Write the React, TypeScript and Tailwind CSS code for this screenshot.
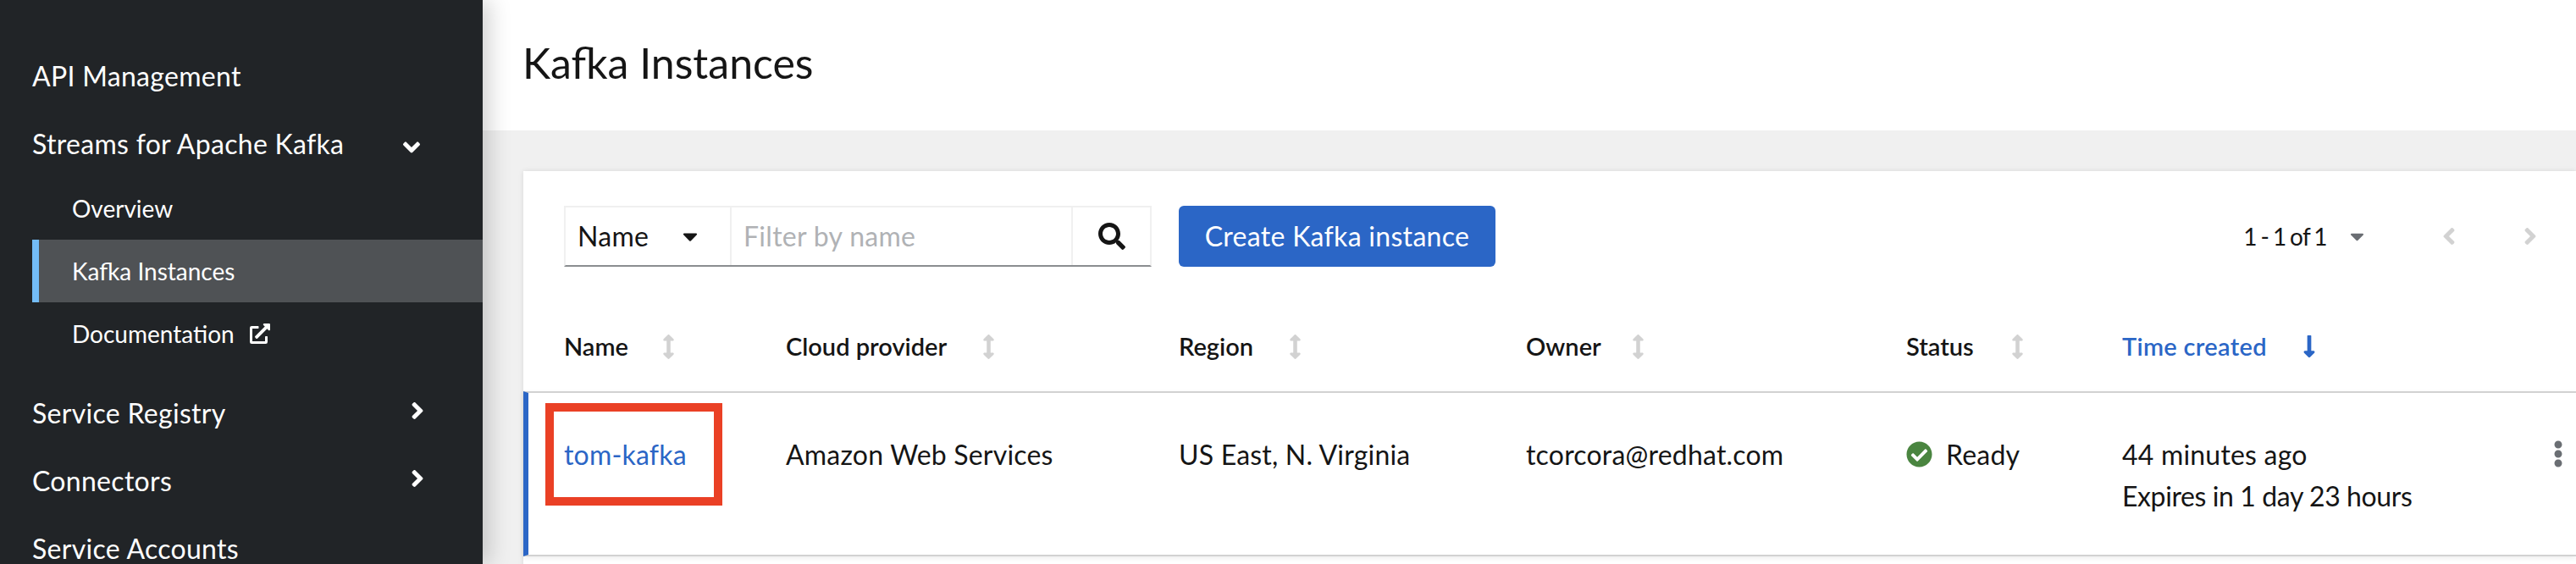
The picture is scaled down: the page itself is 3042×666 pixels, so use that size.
import React from 'react';
import {
  FaAngleDown,
  FaAngleLeft,
  FaAngleRight,
  FaArrowsAltV,
  FaCaretDown,
  FaCheckCircle,
  FaEllipsisV,
  FaExternalLinkAlt,
  FaLongArrowAltDown,
  FaSearch,
} from 'react-icons/fa';

const SortIcon = () => <FaArrowsAltV className="w-[15px] h-[29px] text-[#d2d2d2]" />;

const Sidebar = () => (
  <aside className="w-[570px] shrink-0 bg-[#212427] text-white pt-[50px] z-10 shadow-[8px_0_24px_rgba(0,0,0,0.18)]">
    <div className="h-[80px] pl-[38px] flex items-center text-[32px] tracking-[0.3px]">API Management</div>
    <div className="h-[80px] pl-[38px] pr-[72px] flex items-center justify-between text-[32px] tracking-[0.3px]">
      Streams for Apache Kafka
      <FaAngleDown className="w-[24px] h-[32px] mt-[8px]" />
    </div>
    <div className="h-[73px] pb-[2px] pl-[85px] flex items-center text-[28px]">Overview</div>
    <div className="h-[74px] ml-[38px] pl-[39px] flex items-center text-[28px] bg-[#4f5255] border-l-[8px] border-[#73bcf7]">
      Kafka Instances
    </div>
    <div className="h-[74px] pl-[85px] flex items-center gap-[18px] text-[28px]">
      Documentation
      <FaExternalLinkAlt className="w-[24px] h-[24px]" />
    </div>
    <div className="h-[80px] mt-[17px] pl-[38px] pr-[68px] flex items-center justify-between text-[32px] tracking-[0.3px]">
      Service Registry
      <FaAngleRight className="w-[18px] h-[32px] -mt-[6px]" />
    </div>
    <div className="h-[80px] pl-[38px] pr-[68px] flex items-center justify-between text-[32px] tracking-[0.3px]">
      Connectors
      <FaAngleRight className="w-[18px] h-[32px] -mt-[6px]" />
    </div>
    <div className="h-[80px] pl-[38px] flex items-center text-[32px] tracking-[0.3px]">Service Accounts</div>
  </aside>
);

const Toolbar = () => (
  <div className="flex items-stretch h-[72px] pr-[46px] tracking-[0.3px]">
    <div className="flex border-2 border-[#f0f0f0] border-b-[#8a8d90]">
      <div className="w-[194px] pl-[14px] pr-[37px] flex items-center justify-between text-[32px] text-[#151515]">
        Name
        <FaCaretDown className="w-[20px] h-[28px]" />
      </div>
      <div className="w-[403px] pl-[14px] flex items-center border-l-2 border-[#f0f0f0] text-[32px] text-[#b0b2b5]">
        Filter by name
      </div>
      <div className="flex-1 w-[93px] flex items-center justify-center border-l-2 border-[#f0f0f0]">
        <FaSearch className="w-[32px] h-[32px] text-[#151515]" />
      </div>
    </div>
    <button className="ml-[32px] w-[374px] bg-[#2b66c6] rounded-[6px] text-white text-[32px]">Create Kafka instance</button>
    <div className="ml-auto flex items-center text-[#151515] text-[28px] tracking-[-0.6px] [word-spacing:-2px]">
      1 - 1 of 1
      <FaCaretDown className="ml-[27px] w-[17px] h-[26px] text-[#6a6e73]" />
      <FaAngleLeft className="ml-[92px] w-[16px] h-[32px] text-[#d2d2d2]" />
      <FaAngleRight className="ml-[80px] w-[16px] h-[32px] text-[#d2d2d2]" />
    </div>
  </div>
);

const headers = [
  { label: 'Name', gap: 'gap-[40px]' },
  { label: 'Cloud provider', gap: 'gap-[42px]' },
  { label: 'Region', gap: 'gap-[42px]' },
  { label: 'Owner', gap: 'gap-[36px]' },
  { label: 'Status', gap: 'gap-[44px]' },
];

const KafkaTable = () => (
  <div className="mt-[43px]">
    <div className="h-[104px] pb-[2px] pl-[48px] grid grid-cols-[262px_464px_410px_449px_255px_503px_20px] items-center text-[29px] font-semibold text-[#151515]">
      {headers.map((h) => (
        <div key={h.label} className={`flex items-center ${h.gap}`}>
          {h.label}
          <SortIcon />
        </div>
      ))}
      <div className="flex items-center gap-[42px] text-[#2b66c6] tracking-[0.3px]">
        Time created
        <FaLongArrowAltDown className="w-[16px] h-[30px]" />
      </div>
    </div>
    <div className="h-[195px] pl-[42px] pt-[48px] grid grid-cols-[262px_464px_410px_449px_255px_503px_20px] content-start border-l-[6px] border-[#2b66c6] border-y-2 border-y-[#d2d2d2] text-[32px] tracking-[0.2px] leading-[49px] text-[#151515] shadow-[0_2px_6px_rgba(0,0,0,0.08)]">
      <div className="text-[#2b66c6]">tom-kafka</div>
      <div>Amazon Web Services</div>
      <div>US East, N. Virginia</div>
      <div>tcorcora@redhat.com</div>
      <div className="flex items-start gap-[16px]">
        <FaCheckCircle className="w-[31px] h-[31px] mt-[9px] text-[#4a8540]" />
        Ready
      </div>
      <div>
        <div>44 minutes ago</div>
        <div className="tracking-[-0.4px]">Expires in 1 day 23 hours</div>
      </div>
      <FaEllipsisV className="w-[32px] h-[32px] mt-[8px] -ml-[4px] text-[#6a6e73]" />
    </div>
  </div>
);

export default function App() {
  return (
    <div className="relative w-[3042px] h-[666px] flex overflow-hidden bg-[#f0f0f0] font-['Lato','Liberation_Sans',sans-serif]">
      <Sidebar />
      <main className="flex-1 min-w-0">
        <header className="h-[154px] pb-[6px] bg-white pl-[47px] flex items-center text-[50px] text-[#151515]">Kafka Instances</header>
        <section className="ml-[48px] mt-[48px] pt-[41px] h-[500px] bg-white shadow-[0_0_6px_rgba(0,0,0,0.1)]">
          <div className="pl-[48px]">
            <Toolbar />
          </div>
          <KafkaTable />
        </section>
      </main>
      {/* annotation drawn over the screenshot */}
      <div className="absolute left-[644px] top-[476px] w-[209px] h-[121px] border-[10px] border-[#ea4025]" />
    </div>
  );
}
